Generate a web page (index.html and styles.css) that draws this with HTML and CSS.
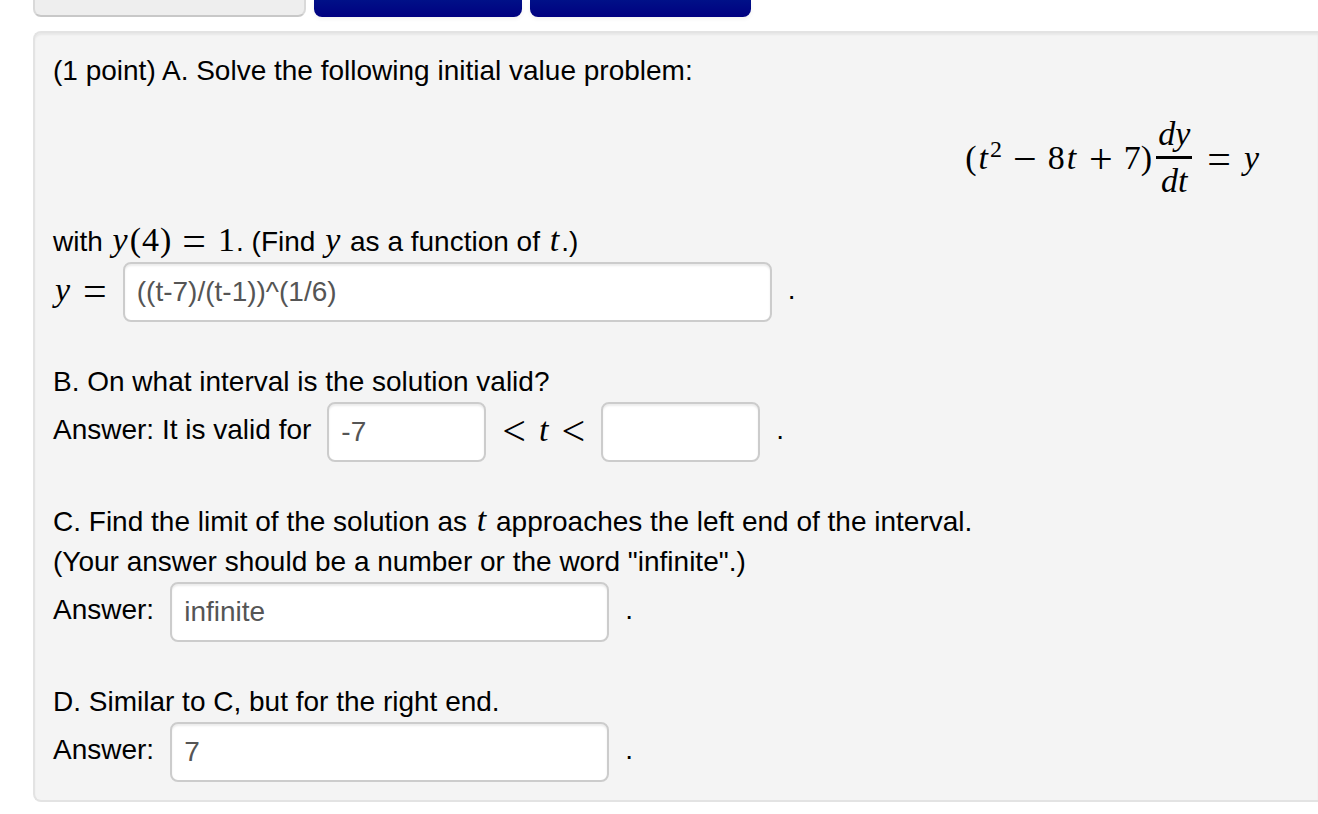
FILE: index.html
```html
<!DOCTYPE html>
<html lang="en">
<head>
<meta charset="utf-8">
<title>Initial value problem</title>
<link rel="stylesheet" href="styles.css">
</head>
<body>
<nav class="toolbar">
  <button class="btn btn-plain" type="button" disabled></button>
  <button class="btn btn-previous" type="button"></button>
  <button class="btn btn-next" type="button"></button>
</nav>
<main class="problem">
  <section class="part">
    <p>(1 point) A. Solve the following initial value problem:</p>
    <div class="equation">
      <span class="math">(<i>t</i><sup>2</sup><span class="op">−</span>8<i>t</i><span class="op">+</span>7)</span>
      <span class="fraction"><i class="numerator">dy</i><i>dt</i></span>
      <span class="math"><span class="op">=</span><i>y</i></span>
    </div>
    <p>with <span class="math"><i>y</i>(<span class="digit">4</span>)<span class="op">=</span><span class="digit">1</span></span>. (Find <span class="math"><i>y</i></span> as a function of <span class="math"><i>t</i></span>.)</p>
    <div class="answer">
      <label class="math" for="solution"><i>y</i><span class="op op-last">=</span></label>
      <input class="field field-long" id="solution" type="text" value="((t-7)/(t-1))^(1/6)">
      <span>.</span>
    </div>
  </section>
  <section class="part">
    <p>B. On what interval is the solution valid?</p>
    <div class="answer">
      <label for="lower">Answer: It is valid for</label>
      <input class="field field-short" id="lower" type="text" value="-7">
      <label class="math" for="upper"><span class="op op-first">&lt;</span><i>t</i><span class="op op-last">&lt;</span></label>
      <input class="field field-short" id="upper" type="text" value="">
      <span>.</span>
    </div>
  </section>
  <section class="part">
    <p>C. Find the limit of the solution as <span class="math"><i>t</i></span> approaches the left end of the interval.</p>
    <p>(Your answer should be a number or the word "infinite".)</p>
    <div class="answer">
      <label for="left-limit">Answer:</label>
      <input class="field" id="left-limit" type="text" value="infinite">
      <span>.</span>
    </div>
  </section>
  <section class="part">
    <p>D. Similar to C, but for the right end.</p>
    <div class="answer">
      <label for="right-limit">Answer:</label>
      <input class="field" id="right-limit" type="text" value="7">
      <span>.</span>
    </div>
  </section>
</main>
</body>
</html>
```
FILE: styles.css
```css
* {
  box-sizing: border-box;
}

body {
  margin: 0;
  padding-left: 33px;
  background: #fff;
  color: #000;
  font: 28px/40px "Liberation Sans", Arial, sans-serif;
}

.toolbar {
  display: flex;
  gap: 8px;
  margin-bottom: 14px;
}

.btn {
  height: 17px;
  padding: 0;
  border: 0;
  border-radius: 0 0 8px 8px;
  background: linear-gradient(#001088, #000080);
  box-shadow: 0 2px 4px rgba(0, 0, 0, 0.06);
}

.btn-plain {
  width: 273px;
  border: 2px solid #d9d9d9;
  border-top: 0;
  border-bottom-color: #c8c8c8;
  background: #eee;
  box-shadow: none;
}

.btn-previous {
  width: 208px;
}

.btn-next {
  width: 221px;
}

.problem {
  display: flex;
  flex-direction: column;
  gap: 40px;
  padding: 18px;
  border: 2px solid #e3e3e3;
  border-right: 0;
  border-radius: 8px 0 0 8px;
  background: #f4f4f4;
  box-shadow: inset 0 2px 2px rgba(0, 0, 0, 0.05);
}

p {
  margin: 0;
}

.math {
  font-family: "Liberation Serif", "Times New Roman", serif;
  font-size: 34px;
  line-height: 32px;
}

.math i {
  padding: 0 2px;
}

.digit {
  padding: 0 1px;
}

.op {
  margin: 0 11px;
  font-size: 42px;
  line-height: 0;
  vertical-align: -4px;
}

.op-first {
  margin-left: 0;
}

.op-last {
  margin-right: 0;
}

.equation {
  display: flex;
  align-items: center;
  justify-content: flex-end;
  gap: 4px;
  height: 131px;
  padding: 2px 39px 0 0;
}

sup {
  font-size: 24px;
  line-height: 0;
  vertical-align: 12px;
}

.fraction {
  display: flex;
  flex-direction: column;
  align-items: center;
  font: 34px/44px "Liberation Serif", "Times New Roman", serif;
}

.numerator {
  padding: 0 2px;
  border-bottom: 3px solid #000;
}

.answer {
  display: flex;
  gap: 16px;
  line-height: 56px;
}

.answer .math {
  line-height: 56px;
}

.field {
  width: 439px;
  height: 60px;
  padding: 0 12px;
  border: 2px solid #ccc;
  border-radius: 8px;
  background: #fff;
  box-shadow: inset 0 2px 2px rgba(0, 0, 0, 0.08);
  color: #555;
  font: inherit;
}

.field-long {
  width: 649px;
}

.field-short {
  width: 159px;
}
```
